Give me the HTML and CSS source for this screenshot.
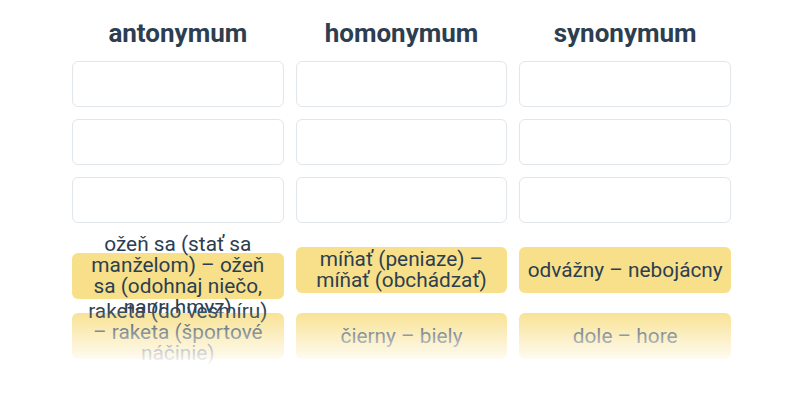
FILE: index.html
```html
<!DOCTYPE html>
<html lang="sk">
<head>
<meta charset="utf-8">
<title>Priraďovanie</title>
<link rel="stylesheet" href="styles.css">
</head>
<body>
<div class="board">
  <div class="columns">
    <div class="column">
      <h2 class="column-title">antonymum</h2>
      <div class="slot"></div>
      <div class="slot"></div>
      <div class="slot"></div>
    </div>
    <div class="column">
      <h2 class="column-title">homonymum</h2>
      <div class="slot"></div>
      <div class="slot"></div>
      <div class="slot"></div>
    </div>
    <div class="column">
      <h2 class="column-title">synonymum</h2>
      <div class="slot"></div>
      <div class="slot"></div>
      <div class="slot"></div>
    </div>
  </div>
  <div class="cards">
    <div class="card card-low"><span>ožeň sa (stať sa manželom) – ožeň sa (odohnaj niečo, napr. hmyz)</span></div>
    <div class="card"><span>míňať (peniaze) – míňať (obchádzať)</span></div>
    <div class="card"><span>odvážny – nebojácny</span></div>
    <div class="card card-tall"><span>raketa (do vesmíru) <span class="keep">– raketa</span> (športové náčinie)</span></div>
    <div class="card"><span>čierny – biely</span></div>
    <div class="card"><span>dole – hore</span></div>
  </div>
  <div class="fade"></div>
</div>
</body>
</html>
```

FILE: styles.css
```css
html, body {
  margin: 0;
  padding: 0;
  background: #ffffff;
}

body {
  font-family: Roboto, "Noto Sans", "Liberation Sans", sans-serif;
  color: #2c3e50;
  width: 800px;
  height: 400px;
  overflow: hidden;
}

.board {
  position: relative;
  width: 659px;
  margin-left: 72px;
  height: 400px;
}

.columns {
  display: grid;
  grid-template-columns: repeat(3, 1fr);
  column-gap: 12px;
}

.column {
  display: flex;
  flex-direction: column;
  gap: 12px;
}

.column-title {
  margin: 18px 0 1px;
  font-size: 26px;
  line-height: 30px;
  font-weight: 700;
  text-align: center;
  color: #2c3e50;
}

.slot {
  height: 44px;
  border: 1px solid #e1e6eb;
  border-radius: 6px;
  background: #ffffff;
}

.cards {
  display: grid;
  grid-template-columns: repeat(3, 1fr);
  column-gap: 12px;
  row-gap: 20px;
  margin-top: 24px;
}

.card {
  height: 46px;
  box-sizing: border-box;
  padding: 0 6px;
  border-radius: 6px;
  background: #f8e08a;
  display: flex;
  align-items: center;
  justify-content: center;
  text-align: center;
  font-size: 20.8px;
  line-height: 21px;
  color: #2c3e50;
}

.card-low {
  margin-top: 6px;
  margin-bottom: -6px;
}

.card-tall span {
  position: relative;
  top: -4px;
}

.card-tall .keep {
  position: static;
  white-space: nowrap;
}

.fade {
  position: absolute;
  left: -72px;
  width: 800px;
  top: 308px;
  height: 92px;
  background: linear-gradient(to bottom, rgba(255,255,255,0) 0px, #ffffff 58px, #ffffff 92px);
  pointer-events: none;
}
```
